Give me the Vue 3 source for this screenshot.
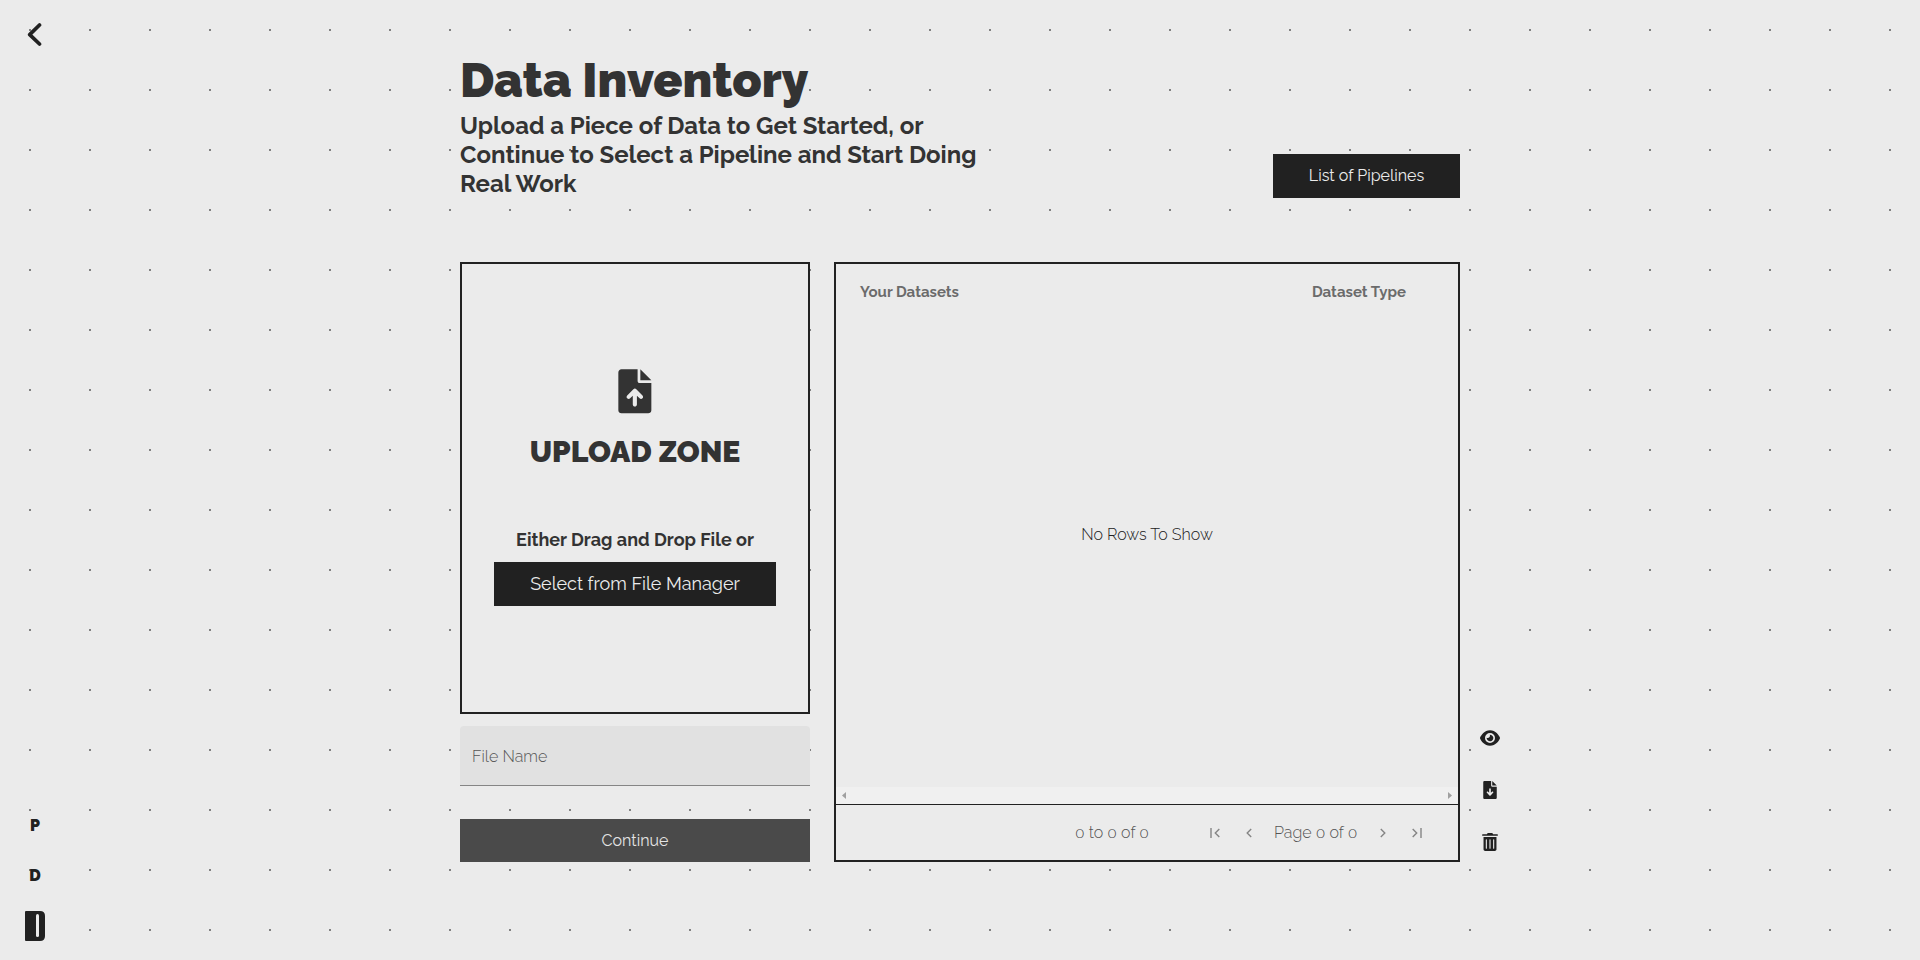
<script setup>
const tools = [
  {
    name: 'view', w: 20, h: 18, box: '0 0 576 512',
    d: 'M288 32c-80.800 0-145.500 36.800-192.600 80.600C48.600 156 17.300 208 2.500 243.700c-3.300 7.900-3.300 16.700 0 24.600C17.300 304 48.600 356 95.400 399.400C142.500 443.200 207.200 480 288 480s145.500-36.800 192.600-80.600c46.800-43.500 78.100-95.400 93-131.100c3.300-7.900 3.300-16.700 0-24.600c-14.900-35.700-46.200-87.700-93-131.100C433.500 68.800 368.800 32 288 32zM144 256a144 144 0 1 1 288 0a144 144 0 1 1-288 0zm144-64c0 35.300-28.700 64-64 64c-11.500 0-22.300-3-31.700-8.400c-1 10.900-.1 22.100 2.900 33.200c13.700 51.200 66.400 81.600 117.600 67.900s81.600-66.400 67.900-117.600c-12.200-45.700-55.500-74.800-101.100-70.800c5.300 9.300 8.400 20.100 8.400 31.700z'
  },
  {
    name: 'download', w: 14, h: 18, box: '0 0 384 512',
    d: 'M224 136V0H36C16 0 0 16 0 36V476c0 20 16 36 36 36H348c20 0 36-16 36-36V160H248c-13 0-24-11-24-24zM256 0V128H384L256 0zM216 232V334.100l31-31c9.400-9.400 24.600-9.400 33.900 0s9.400 24.600 0 33.900l-72 72c-9.400 9.400-24.600 9.400-33.900 0l-72-72c-9.400-9.400-9.400-24.600 0-33.900s24.600-9.400 33.900 0l31 31V232c0-13.300 10.700-24 24-24s24 10.700 24 24z'
  },
  {
    name: 'delete', w: 16, h: 18, box: '0 0 448 512',
    d: 'M432 32H312L302.600 13.300A24 24 0 0 0 281.100 0H166.800A23.700 23.700 0 0 0 145.400 13.300L136 32H16A16 16 0 0 0 0 48V64A16 16 0 0 0 16 80H432A16 16 0 0 0 448 64V48A16 16 0 0 0 432 32zM40 112H408V464c0 26-22 48-48 48H88c-26 0-48-22-48-48V112zM120 176c-9 0-16 7-16 16V432c0 9 7 16 16 16s16-7 16-16V192c0-9-7-16-16-16zM224 176c-9 0-16 7-16 16V432c0 9 7 16 16 16s16-7 16-16V192c0-9-7-16-16-16zM328 176c-9 0-16 7-16 16V432c0 9 7 16 16 16s16-7 16-16V192c0-9-7-16-16-16z'
  }
]
</script>

<template>
  <div class="page">
    <nav class="rail">
      <svg class="back" width="16" height="25" viewBox="0 0 16 25"><path d="M13.500 3 3.700 12.600 13.500 22" /></svg>
      <div class="links">
        <a class="letter">P</a>
        <a class="letter">D</a>
        <svg class="book" width="20" height="30" viewBox="0 0 20 30">
          <path fill="#212121" d="M1 0H15Q20 0 20 5V25Q20 30 15 30H1Q0 30 0 29V1Q0 0 1 0Z" />
          <rect x="11" y="3" width="3" height="23" rx="1.500" fill="#ebebeb" />
        </svg>
      </div>
    </nav>

    <main class="main">
      <header class="head">
        <div class="titles">
          <h1>Data Inventory</h1>
          <h2>Upload a Piece of Data to Get Started, or Continue to Select a Pipeline and Start Doing Real Work</h2>
        </div>
        <button class="btn pipelines">List of Pipelines</button>
      </header>

      <div class="content">
        <section class="left">
          <div class="upload">
            <svg class="file" width="33" height="44" viewBox="-4 -4 384 512">
              <path fill-rule="evenodd" d="M224 136V0H36C16 0 0 16 0 36V476c0 20 16 36 36 36H348c20 0 36-16 36-36V160H248c-13 0-24-11-24-24zM256 0V128H384L256 0zM216 408c0 13.300-10.700 24-24 24s-24-10.700-24-24V305.900l-31 31c-9.400 9.400-24.600 9.400-33.900 0s-9.400-24.600 0-33.900l72-72c9.400-9.400 24.600-9.400 33.900 0l72 72c9.400 9.400 9.400 24.600 0 33.900s-24.600 9.400-33.900 0l-31-31V408z" />
            </svg>
            <div class="zone">UPLOAD ZONE</div>
            <div class="hint">Either Drag and Drop File or</div>
            <button class="btn select">Select from File Manager</button>
          </div>
          <div class="field">File Name</div>
          <button class="btn continue">Continue</button>
        </section>

        <section class="grid">
          <div class="columns">
            <span>Your Datasets</span>
            <span class="type">Dataset Type</span>
          </div>
          <div class="empty">No Rows To Show</div>
          <div class="scroll">
            <svg width="4" height="7" viewBox="0 0 4 7"><path d="M4 0V7L0 3.500Z" /></svg>
            <svg width="4" height="7" viewBox="0 0 4 7"><path d="M0 0V7L4 3.500Z" /></svg>
          </div>
          <div class="pager">
            <span class="summary"><b>0</b> to <b>0</b> of <b>0</b></span>
            <svg class="first" width="10" height="10" viewBox="0 0 10 10"><path d="M1 0V10M9.300 1 5.300 5 9.300 9" /></svg>
            <svg class="prev" width="6" height="10" viewBox="0 0 6 10"><path d="M5.200 1 1.200 5 5.200 9" /></svg>
            <span class="number">Page <b>0</b> of <b>0</b></span>
            <svg class="next" width="6" height="10" viewBox="0 0 6 10"><path d="M.8 1 4.800 5 .8 9" /></svg>
            <svg class="last" width="10" height="10" viewBox="0 0 10 10"><path d="M9 0V10M.7 1 4.700 5 .7 9" /></svg>
          </div>
        </section>
      </div>
    </main>

    <aside class="tools">
      <svg v-for="t in tools" :key="t.name" :width="t.w" :height="t.h" :viewBox="t.box"><path fill-rule="evenodd" :d="t.d" /></svg>
    </aside>
  </div>
</template>

<style>
body {
  background-color: #ebebeb;
}
</style>

<style scoped>
.page {
  box-sizing: border-box;
  height: 960px;
  display: flex;
  overflow: hidden;
  font-family: Raleway, Lato, sans-serif;
  font-size: 16px;
  color: #333;
  background: #ebebeb radial-gradient(circle at 30px 30px, #808080 1px, transparent 1px) 0 0 / 60px 60px;
}
.rail {
  box-sizing: border-box;
  width: 460px;
  padding: 22px 0 19px 25px;
  display: flex;
  flex-direction: column;
  justify-content: space-between;
  align-items: flex-start;
}
.back {
  margin-left: 1px;
  fill: none;
  stroke: #212121;
  stroke-width: 3.7;
  stroke-linecap: round;
  stroke-linejoin: round;
}
.links {
  width: 20px;
  display: flex;
  flex-direction: column;
  align-items: center;
}
.letter {
  height: 20px;
  margin-bottom: 30px;
  line-height: 20px;
  font-size: 16px;
  font-weight: 900;
  color: #212121;
}
.letter + .book {
  margin-top: -5px;
}
.main {
  width: 1000px;
  padding-top: 52px;
}
.head {
  height: 146px;
  display: flex;
  justify-content: space-between;
  align-items: flex-end;
}
.titles {
  width: 540px;
}
h1 {
  margin: 0 0 3px;
  font-size: 48px;
  font-weight: 900;
  line-height: 56px;
}
h2 {
  margin: 0;
  font-size: 24px;
  font-weight: 700;
  line-height: 29px;
}
.btn {
  display: block;
  height: 44px;
  padding: 0 0 2px;
  border: 0;
  font: 400 16px Raleway, Lato, sans-serif;
  color: #ebebeb;
  background: #212121;
}
.pipelines {
  width: 187px;
}
.content {
  margin-top: 64px;
  height: 600px;
  display: flex;
  gap: 24px;
}
.left {
  width: 350px;
}
.upload {
  box-sizing: border-box;
  height: 452px;
  padding-top: 105px;
  border: 2px solid #212121;
  background: #ebebeb;
  display: flex;
  flex-direction: column;
  align-items: center;
}
.file {
  margin-right: 1px;
  overflow: visible;
  fill: #333;
}
.zone {
  margin-top: 21px;
  font-size: 30px;
  font-weight: 900;
  line-height: 35px;
}
.hint {
  margin-top: 60px;
  font-size: 18px;
  font-weight: 700;
  line-height: 22px;
}
.select {
  width: 282px;
  margin-top: 11px;
  font-size: 18px;
}
.field {
  box-sizing: border-box;
  height: 60px;
  margin-top: 12px;
  padding: 1px 0 0 12px;
  line-height: 60px;
  font-weight: 300;
  color: #555;
  background: #e1e1e1;
  border-bottom: 1px solid #858585;
  border-radius: 4px 4px 0 0;
}
.continue {
  width: 350px;
  height: 43px;
  margin-top: 33px;
  padding-bottom: 1px;
  color: #e4e4e4;
  background: #4a4a4a;
}
.grid {
  box-sizing: border-box;
  width: 626px;
  border: 2px solid #212121;
  background: #ebebeb;
  display: flex;
  flex-direction: column;
}
.columns {
  height: 56px;
  padding: 0 52px 0 24px;
  display: flex;
  justify-content: space-between;
  align-items: center;
  font-size: 15px;
  font-weight: 700;
  color: #6b6b6b;
}
.empty {
  flex: 1;
  display: flex;
  align-items: center;
  justify-content: center;
  padding-bottom: 38px;
  font-weight: 300;
  color: #222;
}
.scroll {
  box-sizing: border-box;
  height: 17px;
  padding: 0 6px 1px;
  display: flex;
  align-items: center;
  justify-content: space-between;
  background: #f0f0f0;
  fill: #a0a0a0;
}
.pager {
  height: 55px;
  display: flex;
  align-items: center;
  justify-content: flex-end;
  padding-right: 36px;
  border-top: 1px solid #212121;
  font-weight: 300;
  color: #555;
}
.pager b {
  margin: 0 0.5px;
  font-family: Lato, sans-serif;
  font-size: 16px;
  font-weight: 300;
  line-height: 1;
  font-variant-numeric: oldstyle-nums;
  color: #444;
}
.summary,
.number {
  line-height: 19px;
  white-space: nowrap;
}
.summary {
  width: 75px;
}
.number {
  width: 84px;
}
.pager svg {
  fill: none;
  stroke: #858585;
  stroke-width: 1.4;
}
.first {
  margin-left: 60px;
}
.prev {
  margin: 0 22px 0 26px;
}
.next {
  margin: 0 26px 0 22px;
}
.tools {
  padding: 729px 0 0 20px;
  display: flex;
  flex-direction: column;
  align-items: center;
  gap: 34px;
  fill: #212121;
}
</style>
